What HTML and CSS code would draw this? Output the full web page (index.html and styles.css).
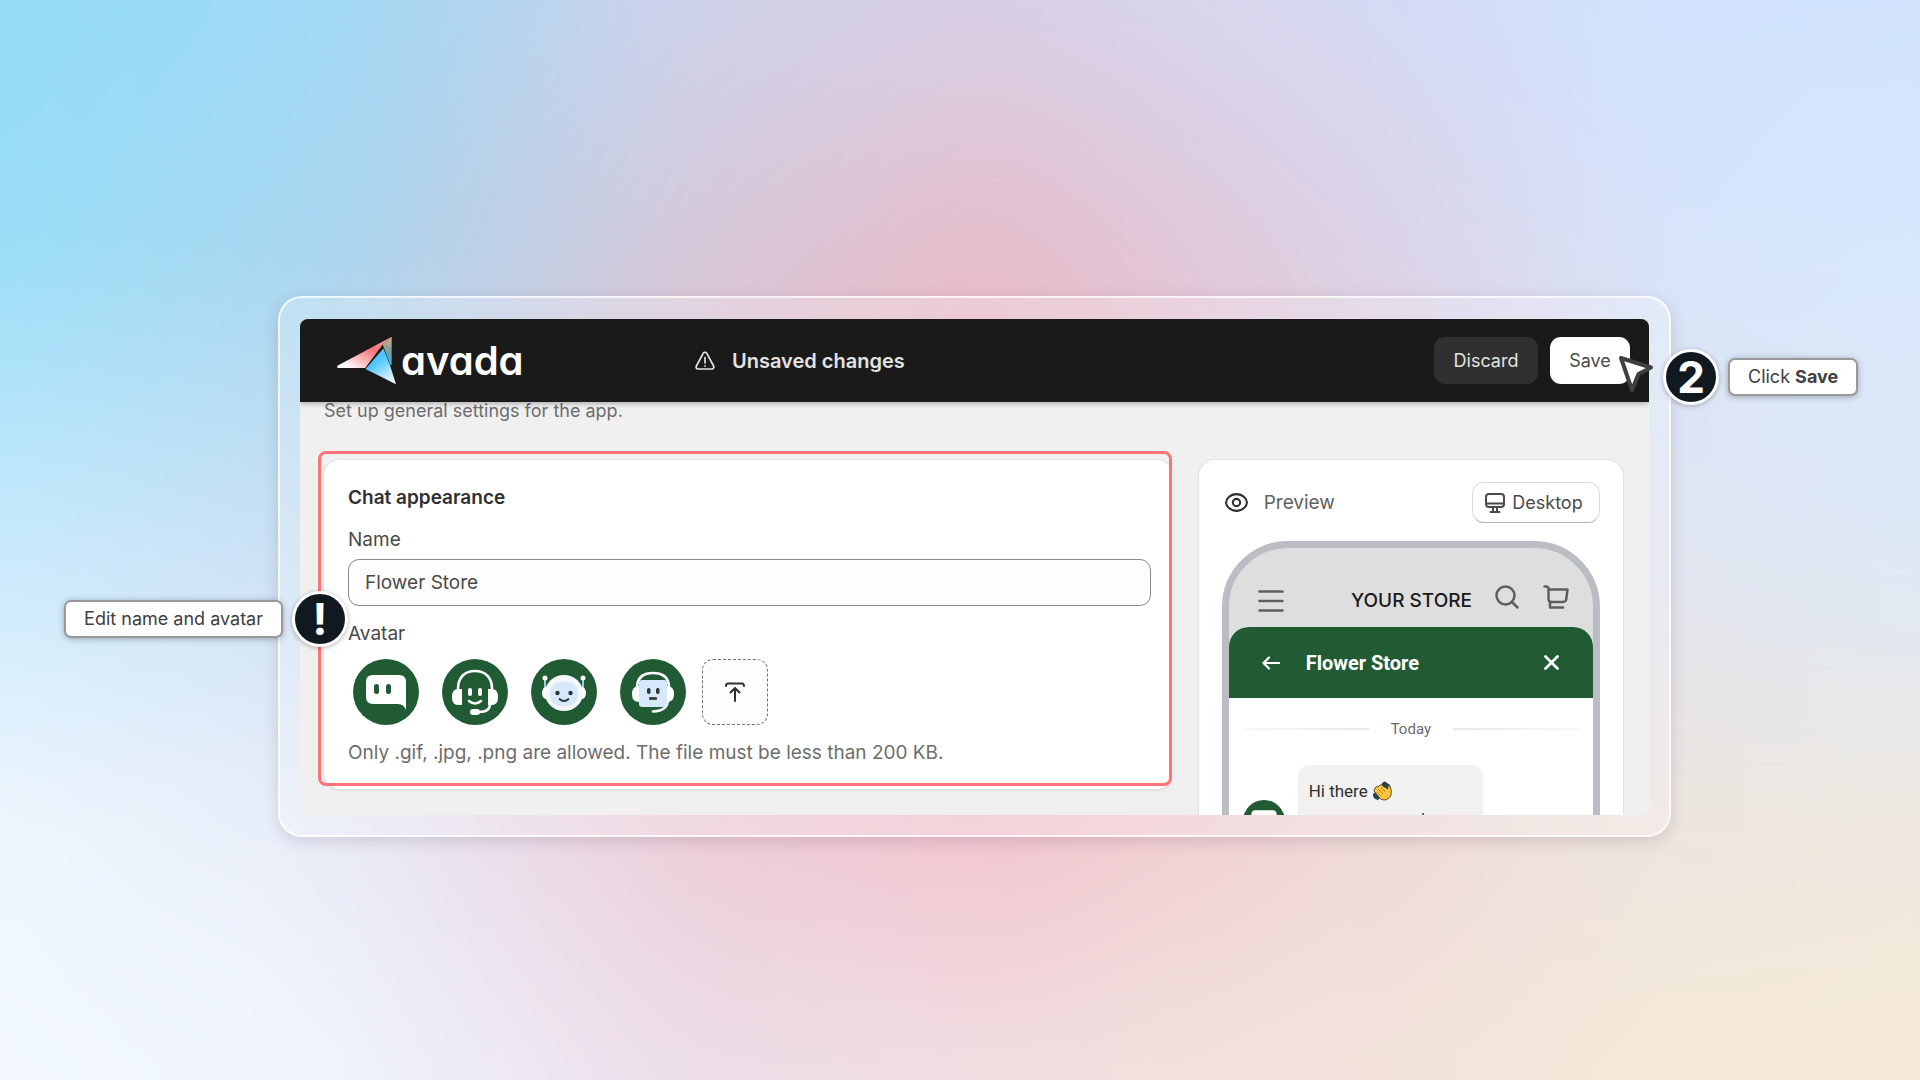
FILE: index.html
```html
<!DOCTYPE html>
<html lang="en">
<head>
<meta charset="utf-8">
<title>Chat settings</title>
<meta name="viewport" content="width=device-width, initial-scale=1">
<link rel="stylesheet" href="styles.css">
</head>
<body>
<div class="backdrop" aria-hidden="true">
  <div class="blend">
    <div class="band band-1"></div>
    <div class="band band-2"></div>
    <div class="band band-3"></div>
    <div class="band band-4"></div>
    <div class="band band-5"></div>
    <div class="band band-6"></div>
    <div class="band band-7"></div>
  </div>
</div>
<main class="stage">
  <div class="frame">
    <div class="app">
      <header class="topbar">
        <a class="brand" href="#" aria-label="avada">
          <svg class="brand-mark" viewBox="0 0 182 148">
            <defs>
              <linearGradient id="wing" x1="0" y1="1" x2="1" y2="0"><stop offset=".1" stop-color="#fff"/><stop offset=".6" stop-color="#f77678"/><stop offset="1" stop-color="#f5a090"/></linearGradient>
              <linearGradient id="tail" x1="0" y1="0" x2="0" y2="1"><stop offset="0" stop-color="#e8a58c"/><stop offset=".55" stop-color="#6fa3a0"/><stop offset="1" stop-color="#35b5ea"/></linearGradient>
              <linearGradient id="body" x1=".3" y1="0" x2=".9" y2="1"><stop offset=".3" stop-color="#4fc6ff"/><stop offset="1" stop-color="#fff"/></linearGradient>
            </defs>
            <path fill="url(#wing)" d="M3 90 167 2 140 26 87 97H3z"/>
            <path fill="url(#tail)" d="M167 2v84l-4 2-23-62z"/>
            <path fill="url(#body)" d="M142 38l20 50 18 58-92-46z"/>
          </svg>
          <span class="brand-name">avada</span>
        </a>
        <div class="status">
          <svg class="status-icon" viewBox="0 0 20 20" fill="none" stroke="#e3e3e3" stroke-width="1.700" stroke-linecap="round" stroke-linejoin="round"><path d="M8.300 2.200a2 2 0 0 1 3.400 0l6.900 12.800a2 2 0 0 1-1.700 3H3.100a2 2 0 0 1-1.700-3z"/><path d="M10 6.500V12M10 14.800v.2"/></svg>
          <span>Unsaved changes</span>
        </div>
        <div class="actions">
          <button class="btn btn-dark" type="button">Discard</button>
          <button class="btn btn-light" type="button">Save</button>
        </div>
      </header>
      <div class="content">
        <p class="lead">Set up general settings for the app.</p>
        <div class="columns">
          <section class="card appearance">
            <h2 class="card-title">Chat appearance</h2>
            <label class="label" for="name">Name</label>
            <input class="field" id="name" type="text" value="Flower Store">
            <p class="label avatar-label">Avatar</p>
            <div class="avatars">
              <button class="avatar" type="button" aria-label="Chat bubble avatar">
                <svg viewBox="0 0 66 66"><path fill="#fff" d="M20 16h26q7 0 7 7v28q-2-6-8-6H20q-7 0-7-7V23q0-7 7-7z"/><rect x="21" y="25" width="5" height="10" rx="2.500" fill="#205b34"/><rect x="33" y="25" width="5" height="10" rx="2.500" fill="#205b34"/></svg>
              </button>
              <button class="avatar" type="button" aria-label="Headset avatar">
                <svg viewBox="0 0 66 66" fill="none" stroke="#fff" stroke-width="2.500"><path d="M16 30C16 18 23 12 33 12s17 6 17 18M48 45c0 6-4 8-11 8" stroke-linecap="round"/><path fill="#fff" stroke="none" d="M20 30v16h-4q-6 0-6-8t6-8zM46 30v16h4q6 0 6-8t-6-8z"/><rect x="28" y="50" width="10" height="6" rx="3" fill="#fff" stroke="none"/><rect x="26" y="29" width="4" height="8" rx="2" fill="#fff" stroke="none"/><rect x="36" y="29" width="4" height="8" rx="2" fill="#fff" stroke="none"/><path d="M27 42q6 5 12 0" stroke-linecap="round"/></svg>
              </button>
              <button class="avatar" type="button" aria-label="Smiling robot avatar">
                <svg viewBox="0 0 66 66"><path d="M14 20v16M52 20v16" stroke="#a9c9dc" stroke-width="2"/><circle cx="14" cy="19" r="2.500" fill="#fff"/><circle cx="52" cy="19" r="2.500" fill="#fff"/><ellipse cx="15" cy="34" rx="4" ry="6" fill="#fff"/><ellipse cx="51" cy="34" rx="4" ry="6" fill="#fff"/><ellipse cx="33" cy="34" rx="19" ry="18" fill="#f4f7fa"/><rect x="19" y="23" width="28" height="24" rx="11" fill="#d5e8fc"/><circle cx="26.500" cy="34" r="2.200" fill="#333"/><circle cx="39.500" cy="34" r="2.200" fill="#333"/><path d="M28.500 40q4.500 4 9 0" stroke="#333" stroke-width="1.800" fill="none" stroke-linecap="round"/></svg>
              </button>
              <button class="avatar" type="button" aria-label="Square robot avatar">
                <svg viewBox="0 0 66 66"><path d="M17 29C17 18 24 14 33 14s16 4 16 15M48 40c0 8-4 12-15 12.500" stroke="#fff" stroke-width="2.600" fill="none" stroke-linecap="round"/><path fill="#fff" d="M19 27v16q-7 0-7-8t7-8zM47 27v16q7 0 7-8t-7-8z"/><rect x="19" y="21" width="28" height="27" rx="3" fill="#d5e8fc"/><rect x="27" y="29" width="3.500" height="6" rx="1.700" fill="#333"/><rect x="36" y="29" width="3.500" height="6" rx="1.700" fill="#333"/><rect x="29" y="38" width="8" height="3" rx="1" fill="#444"/></svg>
              </button>
              <button class="upload" type="button" aria-label="Upload avatar">
                <svg viewBox="0 0 20 20" fill="none" stroke="#303030" stroke-width="2" stroke-linecap="round" stroke-linejoin="round"><path d="M1 4q0-2.500 2-2.500h14q2 0 2 2.500M10 19V7M5.500 10.500 10 6l4.500 4.500"/></svg>
              </button>
            </div>
            <p class="hint">Only .gif, .jpg, .png are allowed. The file must be less than 200 KB.</p>
            <div class="highlight"></div>
          </section>
          <section class="card preview">
            <div class="preview-head">
              <div class="preview-title">
                <svg class="eye" viewBox="0 0 22 18" fill="none" stroke="#303030" stroke-width="2"><path d="M11 1c6 0 10 4.500 10 8s-4 8-10 8S1 12.500 1 9s4-8 10-8z"/><circle cx="11" cy="9" r="3.500"/></svg>
                <span>Preview</span>
              </div>
              <button class="device" type="button">
                <svg class="monitor" viewBox="0 0 20 20" fill="none" stroke="#4a4a4a" stroke-width="2" stroke-linecap="round"><rect x="1" y="1" width="18" height="13" rx="3"/><path d="M1 10.500h18M8 14v4M12 14v4M5.500 19h9"/></svg>
                <span>Desktop</span>
              </button>
            </div>
            <div class="phone">
              <div class="store-bar">
                <svg class="burger" viewBox="0 0 26 22" stroke="#5c5f62" stroke-width="2.500" stroke-linecap="round"><path d="M1.500 1.500h23M1.500 11h23M1.500 20.500h23"/></svg>
                <span class="store-name">YOUR STORE</span>
                <svg class="store-icon" viewBox="0 0 24 24" fill="none" stroke="#5c5f62" stroke-width="2.500" stroke-linecap="round"><circle cx="10.500" cy="10.500" r="9"/><path d="m17 17 5.500 5.500"/></svg>
                <svg class="store-icon" viewBox="0 0 26 24" fill="none" stroke="#5c5f62" stroke-width="2.500" stroke-linecap="round" stroke-linejoin="round"><path d="M1.500 1.500h1.500q2.500 0 2.500 2.500v10q0 3 3 3h11.500q3 0 3.300-3L24.500 4.500h-19M7 17v5.500h13"/></svg>
              </div>
              <div class="chat-bar">
                <svg class="back" viewBox="0 0 18 14" fill="none" stroke="#fff" stroke-width="2.200" stroke-linecap="round" stroke-linejoin="round"><path d="M17 7H1.500M7 1.500 1.500 7 7 12.500"/></svg>
                <span class="chat-name">Flower Store</span>
                <svg class="close" viewBox="0 0 15 15" stroke="#fff" stroke-width="2.800" stroke-linecap="round"><path d="m1.500 1.500 12 12M13.500 1.500l-12 12"/></svg>
              </div>
              <div class="chat-body">
                <div class="day"><span>Today</span></div>
                <div class="message">
                  <svg class="message-avatar" viewBox="0 0 66 66"><circle cx="33" cy="33" r="33" fill="#205b34"/><path fill="#fff" d="M20 16h26q7 0 7 7v28q-2-6-8-6H20q-7 0-7-7V23q0-7 7-7z"/></svg>
                  <div class="bubble">
                    <span>Hi there</span>
                    <svg class="wave" viewBox="0 0 20 20"><path fill="#26414f" d="M10 2q3-3 5 0l3 2-2 4-6-3zM1 14q0-3 3-2l4 5-2 2q-5-1-5-5z"/><path fill="#fbc33c" stroke="#332d20" stroke-width=".8" stroke-linejoin="round" d="M3 7q1-2 3-1l2-2q2-1 3 1l5 3q-1-4 2-3 2 4 1 9-2 5-7 5-4 0-6-4l-4-5z"/><path stroke="#a87d1c" stroke-width=".8" d="m6 8 5 5M9 6l4 5M5 11l4 4"/></svg>
                    <i class="next-line"></i>
                  </div>
                </div>
              </div>
            </div>
          </section>
        </div>
      </div>
    </div>
    <svg class="cursor" viewBox="0 0 36 39"><path d="M3 3 33 12.500 20.500 19 14 35z" fill="#fff" stroke="#3f3f41" stroke-width="4" stroke-linejoin="round"/></svg>
    <div class="callout callout-save">
      <span class="badge">2</span>
      <span class="tip">Click <b>Save</b></span>
    </div>
    <div class="callout callout-edit">
      <span class="tip">Edit name and avatar</span>
      <span class="badge">!</span>
    </div>
  </div>
</main>
</body>
</html>
```
FILE: styles.css
```css
* { box-sizing: border-box; }
body { margin: 0; font-family: Inter, "Liberation Sans", sans-serif; font-size: 18px; color: #303030; }
h2, p { margin: 0; }
button, input { font: inherit; color: inherit; }
svg { display: block; flex: none; }

/* Soft colour field: vertical gradients that fade into each other from left to right */
.backdrop { position: absolute; inset: 0; z-index: -1; overflow: hidden; }
.blend { position: absolute; inset: -120px; filter: blur(48px); }
.band { position: absolute; inset: 0; }
.band-1 { background: linear-gradient(#92dbf7 9%, #9cdff8 29%, #c8eafc 50%, #eef6fe 71%, #f4f9ff 91%); }
.band-2 { background: linear-gradient(#a0d9f5 9%, #abd6ef 29%, #cbdff2 50%, #e8ecf8 71%, #f0f5fd 91%); mask-image: linear-gradient(90deg, transparent 6%, #000 21%); }
.band-3 { background: linear-gradient(#cdd2ea 9%, #d6c9da 29%, #e6c3d0 50%, #eccdd8 71%, #ecdfea 91%); mask-image: linear-gradient(90deg, transparent 21%, #000 37%); }
.band-4 { background: linear-gradient(#d8d0e6 9%, #e8bcc8 29%, #efb8c2 50%, #f2c4cd 71%, #f1dfe2 91%); mask-image: linear-gradient(90deg, transparent 37%, #000 51%); }
.band-5 { background: linear-gradient(#d6daf3 9%, #dcd0e4 29%, #e8d0d8 50%, #efd8d8 71%, #f3e4dc 91%); mask-image: linear-gradient(90deg, transparent 51%, #000 68%); }
.band-6 { background: linear-gradient(#d0e3ff 9%, #d8e5fa 29%, #e0e6f2 50%, #ede6df 71%, #f5e9d8 91%); mask-image: linear-gradient(90deg, transparent 68%, #000 83%); }
.band-7 { background: linear-gradient(#d1e4ff 9%, #d9e7fb 29%, #dde9f7 50%, #eee8e0 71%, #f6e9d6 91%); mask-image: linear-gradient(90deg, transparent 83%, #000 94%); }

.stage { min-height: 100vh; padding: 296px 249px 243px 278px; }
.frame { position: relative; padding: 21px 20px 20px; border: 2px solid rgba(255, 255, 255, .75); border-radius: 24px; background: rgba(255, 255, 255, .22); box-shadow: 0 4px 16px rgba(60, 40, 60, .16); }
.app { height: 496px; overflow: hidden; border-radius: 8px; background: #f0f0f0; }

.topbar { position: relative; display: flex; align-items: center; height: 83px; padding: 0 19px 0 36px; background: #1a1a1a; box-shadow: 0 1px 6px rgba(0, 0, 0, .35); }
.brand { display: flex; align-items: center; flex: 0 0 359px; gap: 4px; color: #fff; text-decoration: none; }
.brand-mark { width: 61px; height: 49px; }
.brand-name { font-size: 40px; line-height: 48px; font-weight: 600; font-feature-settings: "cv11"; }
.status { display: flex; flex: 1; align-items: center; gap: 17px; font-size: 20px; font-weight: 600; color: #e3e3e3; }
.status-icon { width: 20px; height: 20px; }
.actions { display: flex; gap: 12px; }
.btn { height: 47px; border: 0; border-radius: 11px; }
.btn-dark { width: 104px; background: #303030; color: #e3e3e3; }
.btn-light { width: 80px; background: #fff; color: #4a4a4a; }

.content { padding: 0 26px 0 24px; }
.lead { line-height: 18px; color: #6d6d6d; }
.columns { display: grid; grid-template-columns: 2fr 1fr; gap: 26px; align-items: start; margin-top: 40px; }
.card { border-radius: 16px; background: #fff; box-shadow: 0 0 0 1px #e3e3e3, 0 1px 2px rgba(0, 0, 0, .25); }

.appearance { position: relative; padding: 24px 22px 24px 24px; font-size: 19px; }
.card-title { font-size: 19px; line-height: 28px; font-weight: 600; }
.label { display: block; margin-top: 16px; line-height: 24px; color: #4a4a4a; }
.field { display: block; width: 100%; height: 47px; margin-top: 7px; padding: 0 16px; border: 1px solid #8a8a8a; border-radius: 11px; background: #fdfdfd; color: #4a4a4a; }
.avatars { display: flex; align-items: center; gap: 23px; margin: 13px 0 16px; padding-left: 5px; }
.avatar { width: 66px; height: 66px; padding: 0; border: 0; border-radius: 50%; background: #205b34; }
.upload { display: grid; place-items: center; width: 66px; height: 66px; margin-left: -7px; padding: 0; border: 1px dashed #707070; border-radius: 11px; background: #fdfdfd; }
.upload svg { width: 20px; height: 20px; }
.hint { line-height: 24px; color: #6d6d6d; }
.highlight { position: absolute; top: -9px; bottom: 3px; left: -6px; right: 1px; border: 3px solid #ff7376; border-radius: 8px; pointer-events: none; }

.preview { padding: 22px 23px 0; }
.preview-head { display: flex; align-items: center; justify-content: space-between; }
.preview-title { display: flex; align-items: center; gap: 16px; padding-left: 3px; font-size: 19px; color: #616161; }
.eye { width: 23px; height: 19px; }
.device { display: flex; align-items: center; justify-content: center; gap: 7px; width: 128px; height: 41px; padding: 0 4px 0 0; border: 1px solid #dcdcdc; border-bottom-color: #b5b5b5; border-radius: 12px; background: #fff; color: #4a4a4a; }
.monitor { width: 20px; height: 20px; }
.phone { height: 700px; margin-top: 18px; overflow: hidden; border: 7px solid #babec4; border-radius: 66px; background: #dedede; }
.store-bar { display: flex; align-items: center; height: 79px; padding: 26px 24px 0 29px; }
.burger { width: 26px; height: 22px; }
.store-name { flex: 1; margin-right: 23px; text-align: right; font-size: 19px; font-weight: 500; color: #1a1a1a; }
.store-icon { height: 24px; margin-top: -8px; }
.store-icon + .store-icon { margin-left: 24px; }
.chat-bar { display: flex; align-items: center; height: 71px; padding: 0 34px 0 33px; border-radius: 20px 20px 0 0; background: #205b34; color: #fff; }
.back { width: 18px; height: 14px; }
.chat-name { flex: 1; padding-left: 26px; font-family: Roboto, sans-serif; font-size: 20px; font-weight: 700; }
.close { width: 15px; height: 15px; }
.chat-body { height: 600px; padding: 21px 14px; background: #fff; font-family: Roboto, sans-serif; }
.day { display: flex; align-items: center; gap: 22px; line-height: 20px; font-size: 15px; color: #6b6b6b; }
.day::before, .day::after { content: ""; flex: 1; height: 2px; background: linear-gradient(90deg, #f8f8f8, #e8e8e8); }
.day::after { background: linear-gradient(90deg, #e8e8e8, #f8f8f8); }
.message { display: flex; gap: 13px; margin-top: 26px; }
.message-avatar { width: 42px; height: 42px; margin-top: 35px; }
.bubble { display: grid; grid-template-columns: auto 1fr; column-gap: 4px; width: 185px; height: 120px; padding: 15px 11px; border-radius: 12px; background: #f1f1f1; font-size: 17px; line-height: 22px; align-content: start; align-items: center; }
.wave { width: 20px; height: 20px; }
.next-line { grid-column: 1 / -1; width: 2px; height: 12px; margin: 11px 0 0 113px; background: #5a6b78; }

.cursor { position: absolute; top: 57px; right: 15px; width: 36px; height: 39px; }
.callout { position: absolute; display: flex; align-items: center; white-space: nowrap; }
.callout-save { top: 51px; left: 100%; margin-left: -6px; gap: 9px; }
.callout-edit { top: 293px; right: 100%; margin-right: -68px; gap: 9px; }
.badge { display: grid; place-items: center; width: 56px; height: 56px; border: 3px solid #fff; border-radius: 50%; background: #101820; color: #fff; font-size: 44px; line-height: 50px; font-weight: 700; box-shadow: 0 1px 5px rgba(0, 0, 0, .3); }
.tip { padding: 6px 18px; border: 2px solid #999; border-radius: 7px; background: #fff; line-height: 22px; color: #404040; box-shadow: 0 1px 6px rgba(0, 0, 0, .3); }
```
